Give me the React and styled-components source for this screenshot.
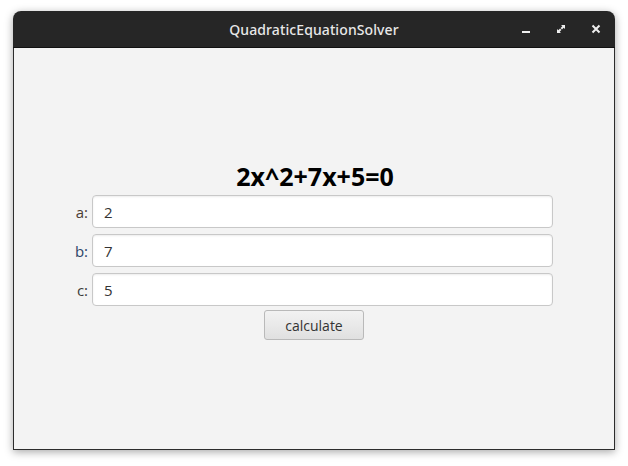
import React, { useState } from "react";
import styled, { createGlobalStyle } from "styled-components";

const Global = createGlobalStyle`
  html, body {
    margin: 0;
    padding: 0;
    background: #ffffff;
  }
`;

const Page = styled.div`
  width: 628px;
  height: 466px;
  padding: 11px 0 0 13px;
  box-sizing: border-box;
`;

const Window = styled.div`
  width: 602px;
  height: 439px;
  display: flex;
  flex-direction: column;
  border-radius: 8px 8px 0 0;
  box-shadow: 0 2px 8px rgba(0, 0, 0, 0.35);
  overflow: hidden;
`;

const TitleBar = styled.div`
  height: 37px;
  flex: none;
  background: #262626;
  border-bottom: 1px solid #111;
  box-sizing: border-box;
  display: grid;
  grid-template-columns: 1fr auto 1fr;
  align-items: center;
`;

const Title = styled.div`
  grid-column: 2;
  font-family: "Noto Sans", sans-serif;
  font-size: 14px;
  font-weight: 500;
  letter-spacing: 0.1px;
  color: #e8e8e8;
`;

const Controls = styled.div`
  grid-column: 3;
  justify-self: end;
  display: flex;
  align-items: center;
  gap: 19px;
  padding-right: 11px;
`;

const Ctl = styled.svg`
  width: 16px;
  height: 16px;
  display: block;
`;

const Content = styled.div`
  flex: 1;
  background: #f3f3f3;
  border: 1px solid #2c2c2c;
  border-top: none;
  display: flex;
  flex-direction: column;
  align-items: center;
  justify-content: center;
  padding-top: 4px;
  font-family: "Open Sans", sans-serif;
`;

const Equation = styled.div`
  font-size: 25px;
  font-weight: 700;
  color: #000;
  line-height: 30px;
  margin-bottom: 4px;
  margin-left: 2px;
`;

const Form = styled.div`
  display: grid;
  grid-template-columns: auto 461px;
  column-gap: 4px;
  row-gap: 6px;
  align-items: center;
`;

const Label = styled.label`
  font-size: 15px;
  color: ${(p) => p.color || "#333"};
  text-align: right;
`;

const Input = styled.input`
  height: 33px;
  box-sizing: border-box;
  border: 1px solid #c8c8c8;
  border-radius: 4px;
  background: #fff;
  box-shadow: inset 0 1px 2px rgba(0, 0, 0, 0.08);
  padding: 0 11px;
  font-family: "Open Sans", sans-serif;
  font-size: 15px;
  color: #333;
  outline: none;
`;

const Button = styled.button`
  margin-top: 4px;
  width: 100px;
  height: 30px;
  border: 1px solid #b9b9b9;
  border-radius: 3px;
  background: linear-gradient(#f2f2f2, #e0e0e0);
  font-family: "Open Sans", sans-serif;
  font-size: 14px;
  color: #333;
  padding: 0;
`;

const fields = [
  { key: "a", color: "#4a3d33", value: "2" },
  { key: "b", color: "#2d4468", value: "7" },
  { key: "c", color: "#3a3a3a", value: "5" },
];

const App = () => {
  const [vals, setVals] = useState({ a: "2", b: "7", c: "5" });

  return (
    <Page>
      <Global />
      <Window>
        <TitleBar>
          <Title>QuadraticEquationSolver</Title>
          <Controls>
            <Ctl viewBox="0 0 16 16">
              <rect x="4" y="10" width="8" height="2" fill="#eee" />
            </Ctl>
            <Ctl viewBox="0 0 16 16">
              <path d="M8 4h4v4l-1.3-1.3L9 8.4 7.6 7 9.3 5.3zM8 12H4V8l1.3 1.3L7 7.6 8.4 9 6.7 10.7z" fill="#eee" />
            </Ctl>
            <Ctl viewBox="0 0 16 16">
              <path d="M4.5 4.5l7 7M11.5 4.5l-7 7" stroke="#eee" strokeWidth="2" />
            </Ctl>
          </Controls>
        </TitleBar>
        <Content>
          <Equation>
            {vals.a}x^2+{vals.b}x+{vals.c}=0
          </Equation>
          <Form>
            {fields.map((f) => (
              <React.Fragment key={f.key}>
                <Label color={f.color}>{f.key}:</Label>
                <Input
                  value={vals[f.key]}
                  onChange={(e) => setVals({ ...vals, [f.key]: e.target.value })}
                />
              </React.Fragment>
            ))}
          </Form>
          <Button>calculate</Button>
        </Content>
      </Window>
    </Page>
  );
};

export default App;
